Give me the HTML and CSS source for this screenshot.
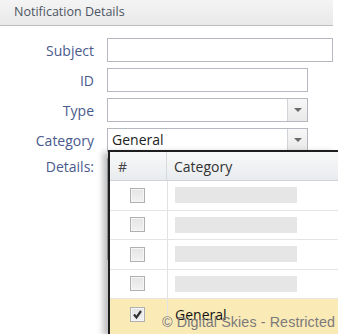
FILE: index.html
```html
<!DOCTYPE html>
<html lang="en">
<head>
    <meta charset="UTF-8">
    <meta name="viewport" content="width=device-width, initial-scale=1.0">
    <title>Notification Details</title>
    <link rel="stylesheet" href="styles.css">
</head>
<body>
    <div class="panel-title">Notification Details</div>

    <form class="details-form">
        <label for="subject">Subject</label>
        <input type="text" id="subject" class="field field-wide">

        <label for="notifId">ID</label>
        <input type="text" id="notifId" class="field">

        <label>Type</label>
        <div class="combo">
            <span class="combo-text"></span>
            <span class="combo-btn"><span class="arrow"></span></span>
        </div>

        <label>Category</label>
        <div class="combo">
            <span class="combo-text">General</span>
            <span class="combo-btn"><span class="arrow"></span></span>
        </div>

        <label class="top-label">Details:</label>
        <div class="details-box"></div>
    </form>

    <!-- category dropdown, open -->
    <div class="dropdown">
        <div class="dd-row dd-head">
            <div class="dd-check">#</div>
            <div class="dd-name">Category</div>
        </div>
        <div class="dd-row">
            <div class="dd-check"><span class="box"></span></div>
            <div class="dd-name"><span class="blur"></span></div>
        </div>
        <div class="dd-row">
            <div class="dd-check"><span class="box"></span></div>
            <div class="dd-name"><span class="blur"></span></div>
        </div>
        <div class="dd-row">
            <div class="dd-check"><span class="box"></span></div>
            <div class="dd-name"><span class="blur"></span></div>
        </div>
        <div class="dd-row">
            <div class="dd-check"><span class="box"></span></div>
            <div class="dd-name"><span class="blur"></span></div>
        </div>
        <div class="dd-row selected">
            <div class="dd-check">
                <span class="box">
                    <svg width="11" height="11" viewBox="0 0 11 11"><path d="M2 5.5 L4.5 8.5 L9 2" fill="none" stroke="#333" stroke-width="2.2"/></svg>
                </span>
            </div>
            <div class="dd-name">General</div>
        </div>
    </div>

    <div class="watermark">© Digital Skies - Restricted</div>
</body>
</html>
```

FILE: styles.css
```css
html, body {
    margin: 0;
    padding: 0;
    overflow: hidden;
}

body {
    font-family: "Open Sans", "DejaVu Sans", sans-serif;
    background: #fff;
    width: 338px;
    height: 334px;
    position: relative;
}

/* Title bar */
.panel-title {
    width: 319px;
    height: 25px;
    line-height: 24px;
    padding-left: 14px;
    font-size: 12.5px;
    color: #4d5563;
    background: linear-gradient(#f4f4f4, #e9e9e9);
    border-bottom: 1px solid #bdbdbd;
    box-sizing: content-box;
}

/* Form grid */
.details-form {
    display: grid;
    grid-template-columns: 94px 1fr;
    column-gap: 13px;
    row-gap: 6px;
    padding-top: 12px;
    align-items: center;
}

.details-form label {
    text-align: right;
    font-size: 14px;
    line-height: 19px;
    color: #4a5a8c;
}

.details-form .top-label {
    align-self: start;
    margin-top: -1px;
}

.field {
    width: 201px;
    height: 24px;
    box-sizing: border-box;
    border: 1px solid #b5b9bf;
    margin: 0;
    padding: 0 4px;
    font: inherit;
}

.field-wide {
    width: 226px;
}

.combo {
    width: 201px;
    height: 24px;
    box-sizing: border-box;
    border: 1px solid #b5b9bf;
    display: flex;
    background: #fff;
}

.combo-text {
    flex: 1;
    font-size: 14px;
    line-height: 22px;
    padding-left: 4px;
    color: #222;
}

.combo-btn {
    width: 19px;
    border-left: 1px solid #d0d3d7;
    background: linear-gradient(#f7f7f7, #e9e9e9);
    display: flex;
    align-items: center;
    justify-content: center;
}

.arrow {
    width: 0;
    height: 0;
    border-left: 4px solid transparent;
    border-right: 4px solid transparent;
    border-top: 4px solid #6b6b6b;
}

.details-box {
    height: 100px;
    width: 226px;
    border: 1px solid #b5b9bf;
}

/* Dropdown overlay */
.dropdown {
    position: absolute;
    left: 108px;
    top: 150px;
    right: 0;
    bottom: 0;
    overflow: hidden;
    background: #fff;
    border-left: 2px solid #1e1e1e;
    border-top: 2px solid #1e1e1e;
    box-shadow: -5px 2px 6px rgba(0, 0, 0, 0.25);
}

.dd-row {
    display: flex;
    height: 29.5px;
    border-bottom: 1px solid #e4e4e4;
    box-sizing: border-box;
}

.dd-head {
    height: 29px;
    background: linear-gradient(#f8f8f8, #e9ecef);
    border-bottom: 1px solid #cfd3d8;
    font-size: 14px;
    color: #444;
}

.dd-check {
    width: 57px;
    flex: none;
    border-right: 1px solid #e2e2e2;
    display: flex;
    align-items: center;
    justify-content: center;
}

.dd-head .dd-check {
    justify-content: flex-start;
    padding-left: 8px;
    box-sizing: border-box;
    border-right-color: #d6d9dd;
}

.dd-name {
    flex: 1;
    display: flex;
    align-items: center;
    padding-left: 7px;
    font-size: 14px;
    color: #333;
}

.box {
    width: 13px;
    height: 13px;
    margin-right: 3px;
    border: 1px solid #b0b0b0;
    background: linear-gradient(#e4e4e4, #f2f2f2);
    box-shadow: inset 0 0 0 1px #f6f6f6;
    display: flex;
    align-items: center;
    justify-content: center;
}

.blur {
    width: 122px;
    height: 16px;
    background: #e6e6e6;
}

.selected {
    height: 40px;
    background: #faeab6;
    border-bottom: none;
    align-items: flex-start;
}

.selected .dd-check,
.selected .dd-name {
    height: 30px;
}

.selected .dd-name {
    color: #111;
}

.watermark {
    position: absolute;
    left: 162px;
    top: 314px;
    font-family: "Liberation Sans", Arial, sans-serif;
    font-size: 14.3px;
    letter-spacing: 0.1px;
    color: #7a7a7a;
    white-space: nowrap;
}
```
